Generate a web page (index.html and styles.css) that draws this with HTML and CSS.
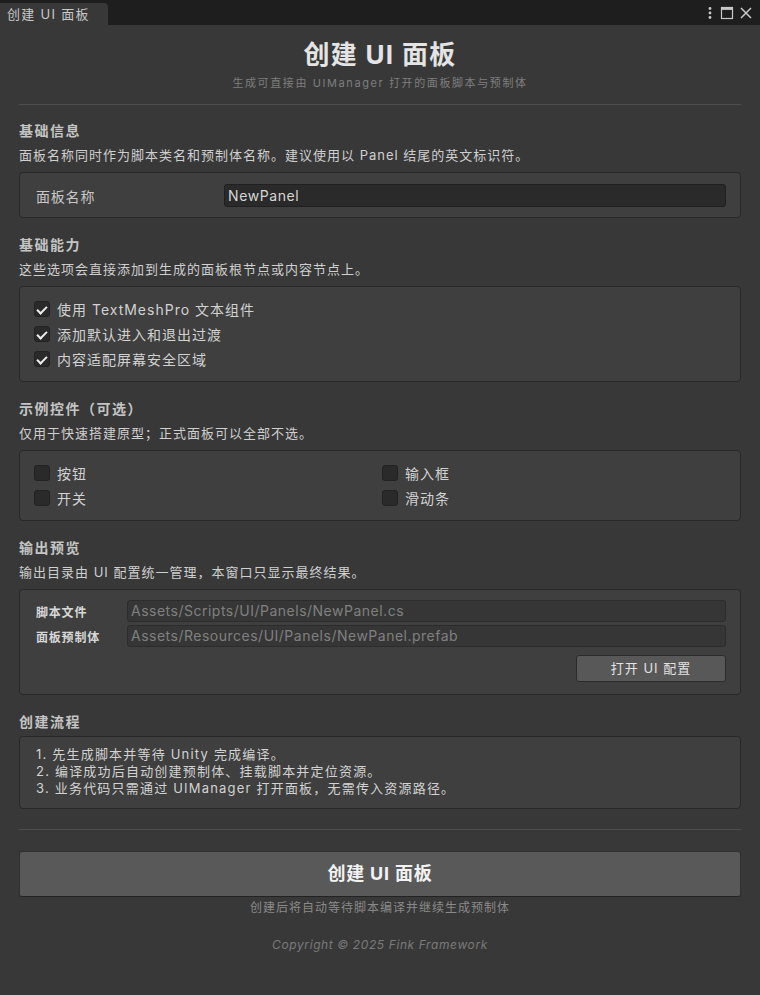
FILE: index.html
```html
<!DOCTYPE html>
<html>
<head>
	<meta charset="utf-8"/>
	<title>创建 UI 面板</title>
	<link rel="stylesheet" href="styles.css">
</head>
<body>
	<div class="tabbar">
		<div class="tab">创建 UI 面板</div>
		<div class="win-icons">
			<svg width="10" height="14" viewBox="0 0 10 14"><circle cx="5" cy="2.5" r="1.4" fill="#c8c8c8"/><circle cx="5" cy="7" r="1.4" fill="#c8c8c8"/><circle cx="5" cy="11.5" r="1.4" fill="#c8c8c8"/></svg>
			<svg width="14" height="14" viewBox="0 0 14 14"><rect x="1.5" y="1.5" width="11" height="11" fill="none" stroke="#c8c8c8" stroke-width="1.2"/><rect x="1.5" y="1.5" width="11" height="2.4" fill="#c8c8c8"/></svg>
			<svg width="14" height="14" viewBox="0 0 14 14"><path d="M2 2 L12 12 M12 2 L2 12" stroke="#c8c8c8" stroke-width="1.5"/></svg>
		</div>
	</div>

	<div class="content">
		<h1 class="title">创建 UI 面板</h1>
		<div class="subtitle">生成可直接由 UIManager 打开的面板脚本与预制体</div>
		<div class="sep"></div>

		<!-- 基础信息 -->
		<div class="sec-title first">基础信息</div>
		<div class="sec-desc">面板名称同时作为脚本类名和预制体名称。建议使用以 Panel 结尾的英文标识符。</div>
		<div class="box name-box">
			<span class="name-label">面板名称</span>
			<div class="text-field">NewPanel</div>
		</div>

		<!-- 基础能力 -->
		<div class="sec-title">基础能力</div>
		<div class="sec-desc">这些选项会直接添加到生成的面板根节点或内容节点上。</div>
		<div class="box check-box">
			<div class="toggle"><span class="cb on"></span>使用 TextMeshPro 文本组件</div>
			<div class="toggle"><span class="cb on"></span>添加默认进入和退出过渡</div>
			<div class="toggle"><span class="cb on"></span>内容适配屏幕安全区域</div>
		</div>

		<!-- 示例控件 -->
		<div class="sec-title">示例控件（可选）</div>
		<div class="sec-desc">仅用于快速搭建原型；正式面板可以全部不选。</div>
		<div class="box check-box grid2">
			<div class="toggle"><span class="cb"></span>按钮</div>
			<div class="toggle"><span class="cb"></span>输入框</div>
			<div class="toggle"><span class="cb"></span>开关</div>
			<div class="toggle"><span class="cb"></span>滑动条</div>
		</div>

		<!-- 输出预览 -->
		<div class="sec-title">输出预览</div>
		<div class="sec-desc">输出目录由 UI 配置统一管理，本窗口只显示最终结果。</div>
		<div class="box out-box">
			<div class="out-row">
				<span class="out-label">脚本文件</span>
				<div class="ro-field">Assets/Scripts/UI/Panels/NewPanel.cs</div>
			</div>
			<div class="out-row">
				<span class="out-label">面板预制体</span>
				<div class="ro-field">Assets/Resources/UI/Panels/NewPanel.prefab</div>
			</div>
			<div class="btn-row">
				<div class="btn">打开 UI 配置</div>
			</div>
		</div>

		<!-- 创建流程 -->
		<div class="sec-title flow-title">创建流程</div>
		<div class="box flow-box">
			<div>1. 先生成脚本并等待 Unity 完成编译。</div>
			<div>2. 编译成功后自动创建预制体、挂载脚本并定位资源。</div>
			<div>3. 业务代码只需通过 UIManager 打开面板，无需传入资源路径。</div>
		</div>

		<div class="sep sep-bottom"></div>
		<div class="big-btn">创建 UI 面板</div>
		<div class="caption">创建后将自动等待脚本编译并继续生成预制体</div>
		<div class="copyright">Copyright © 2025 Fink Framework</div>
	</div>
</body>
</html>
```

FILE: styles.css
```css
html,body{
	margin:0;
	padding:0;
}
body{
	width:760px;
	height:995px;
	background:#383838;
	font-family:Inter,"Noto Sans CJK SC",sans-serif;
	color:#d2d2d2;
	overflow:hidden;
}
/* 顶部标签栏 */
.tabbar{
	height:25px;
	background:#1e1e1e;
	display:flex;
	justify-content:space-between;
	align-items:flex-end;
}
.tab{
	width:108px;
	height:22px;
	line-height:22px;
	background:#383838;
	border-radius:0 4px 0 0;
	padding-left:7px;
	box-sizing:border-box;
	font-size:13px;
	letter-spacing:1.3px;
	color:#c8c8c8;
}
.win-icons{
	display:flex;
	align-items:center;
	gap:5px;
	height:25px;
	padding-right:7px;
}
.content{
	padding:0 19px;
}
.title{
	margin:15px 0 0;
	font-size:26px;
	line-height:30px;
	font-weight:bold;
	letter-spacing:1.3px;
	text-align:center;
	color:#e4e4e4;
}
.subtitle{
	margin-top:5px;
	font-size:11px;
	line-height:16px;
	letter-spacing:1.6px;
	text-align:center;
	color:#7e7e7e;
}
.sep{
	margin-top:13px;
	height:1px;
	background:#4e4e4e;
}
.sec-title{
	margin-top:17px;
	font-size:14px;
	line-height:20px;
	font-weight:bold;
	letter-spacing:1.5px;
	color:#c4c4c4;
}
.sec-title.first{
	margin-top:16px;
}
.sec-desc{
	margin-top:5px;
	font-size:13px;
	line-height:18px;
	letter-spacing:1px;
	color:#cfcfcf;
}
.box{
	margin-top:8px;
	background:#3f3f3f;
	border:1px solid #282828;
	border-radius:4px;
}
/* 面板名称 */
.name-box{
	display:flex;
	align-items:center;
	padding:11px 14px 10px 16px;
}
.name-label{
	width:188px;
	font-size:14px;
	letter-spacing:0.8px;
	color:#c8c8c8;
}
.text-field{
	flex:1;
	height:23px;
	line-height:21px;
	box-sizing:border-box;
	background:#2a2a2a;
	border:1px solid #202020;
	border-radius:3px;
	padding-left:3px;
	font-size:14px;
	letter-spacing:0.6px;
	color:#d6d6d6;
}
/* 勾选框 */
.check-box{
	padding:9px 14px 10px;
}
.grid2{
	display:grid;
	grid-template-columns:344px 1fr;
	column-gap:4px;
}
.toggle{
	height:25px;
	display:flex;
	align-items:center;
	gap:7px;
	font-size:14px;
	letter-spacing:1px;
	color:#d2d2d2;
}
.cb{
	width:16px;
	height:16px;
	box-sizing:border-box;
	background:#2a2a2a;
	border:1px solid #222;
	border-radius:3px;
	position:relative;
}
.cb.on::after{
	content:"";
	position:absolute;
	left:4px;
	top:2px;
	width:4px;
	height:8px;
	border:solid #eee;
	border-width:0 2px 2px 0;
	transform:rotate(45deg);
}
/* 输出预览 */
.out-box{
	padding:10px 14px 12px 16px;
}
.out-row{
	display:flex;
	align-items:center;
	margin-bottom:3px;
}
.out-label{
	width:91px;
	font-size:12px;
	font-weight:bold;
	letter-spacing:0.8px;
	color:#d8d8d8;
}
.ro-field{
	flex:1;
	height:22px;
	line-height:20px;
	box-sizing:border-box;
	background:#363636;
	border:1px solid #2c2c2c;
	border-radius:3px;
	padding-left:3px;
	font-size:14px;
	letter-spacing:0.5px;
	color:#808080;
}
.btn-row{
	display:flex;
	justify-content:flex-end;
	margin-top:8px;
}
.btn{
	width:150px;
	height:27px;
	line-height:25px;
	box-sizing:border-box;
	background:#585858;
	border:1px solid #2b2b2b;
	border-radius:3px;
	text-align:center;
	font-size:13px;
	letter-spacing:1px;
	color:#e2e2e2;
}
/* 创建流程 */
.flow-title{
	margin-top:17px;
}
.flow-box{
	margin-top:4px;
	padding:9px 16px 11px;
	font-size:13px;
	line-height:17px;
	letter-spacing:1.2px;
	color:#d2d2d2;
}
.sep-bottom{
	margin-top:20px;
}
.big-btn{
	margin-top:21px;
	height:46px;
	line-height:44px;
	box-sizing:border-box;
	background:#595959;
	border:1px solid #303030;
	border-bottom-color:#222;
	border-radius:3px;
	text-align:center;
	font-size:18px;
	font-weight:bold;
	letter-spacing:0.8px;
	color:#f2f2f2;
}
.caption{
	margin-top:3px;
	font-size:12px;
	line-height:16px;
	letter-spacing:1px;
	text-align:center;
	color:#8a8a8a;
}
.copyright{
	margin-top:21px;
	font-size:12px;
	line-height:16px;
	letter-spacing:0.6px;
	font-style:italic;
	text-align:center;
	color:#7a7a7a;
}
```
